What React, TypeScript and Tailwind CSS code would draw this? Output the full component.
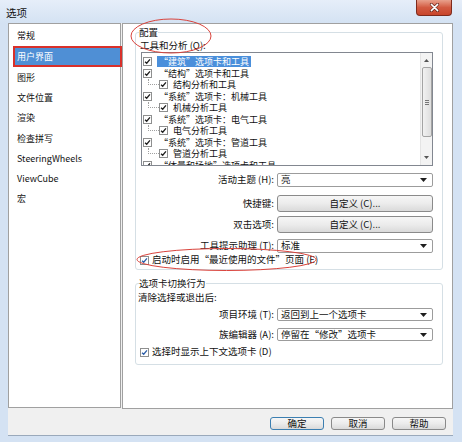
import React from "react";

const font = "font-['Noto_Sans_CJK_SC','Noto_Sans',sans-serif]";

const navItems = ["常规", "用户界面", "图形", "文件位置", "渲染", "检查拼写", "SteeringWheels", "ViewCube", "宏"];

const treeRows = [
  { text: "“建筑”选项卡和工具", sel: true },
  { text: "“结构”选项卡和工具" },
  { text: "结构分析和工具", child: true },
  { text: "“系统”选项卡：机械工具" },
  { text: "机械分析工具", child: true },
  { text: "“系统”选项卡：电气工具" },
  { text: "电气分析工具", child: true },
  { text: "“系统”选项卡：管道工具" },
  { text: "管道分析工具", child: true },
  { text: "“体量和场地”选项卡和工具" },
];

function Check({ blue }: { blue?: boolean }) {
  return (
    <span className="inline-flex h-[9px] w-[9px] shrink-0 items-center justify-center border border-[#8e8f8f] bg-white">
      <svg viewBox="0 0 8 8" className="h-[7px] w-[7px]">
        <path d="M1.2 4.2 L3.1 6 L6.8 1.6" fill="none" stroke={blue ? "#2c5ea8" : "#1e1e1e"} strokeWidth="1.5" />
      </svg>
    </span>
  );
}

function Arrow() {
  return (
    <svg viewBox="0 0 7 4" className="h-[4px] w-[7px]">
      <path d="M0 0 H7 L3.5 4 Z" fill="#1e1e1e" />
    </svg>
  );
}

function Dropdown({ value, h = "h-[14px]" }: { value: string; h?: string }) {
  return (
    <div className={`flex ${h} w-[156px] items-center justify-between rounded-[2px] border border-[#9c9c9c] bg-white pl-[3px] pr-[5px] leading-none`}>
      <span>{value}</span>
      <Arrow />
    </div>
  );
}

function WinButton({ children, w = "w-[156px]", h = "h-[17px]", def }: { children: React.ReactNode; w?: string; h?: string; def?: boolean }) {
  return (
    <div
      className={`flex ${h} ${w} items-center justify-center rounded-[3px] border ${
        def ? "border-[#3c7fb1]" : "border-[#8a8a8a]"
      } bg-linear-to-b from-[#f6f6f6] via-[#ececec] to-[#dadada] leading-none`}
    >
      {children}
    </div>
  );
}

function FieldRow({ label, children, className }: { label: string; children: React.ReactNode; className: string }) {
  return (
    <div className={`flex items-center ${className}`}>
      <span className="w-[134px] text-right leading-none">{label}</span>
      <span className="ml-[3px]">{children}</span>
    </div>
  );
}

export default function App() {
  return (
    <div className={`relative h-[442px] w-[462px] overflow-hidden bg-[#d4e2f3] text-[9.5px] text-[#111] ${font}`}>
      {/* title bar */}
      <div className="flex h-[23px] items-start justify-between bg-linear-to-b from-[#e6eef9] to-[#d4e2f3]">
        <span className="ml-[6px] mt-[6px] text-[10.5px] leading-[14px] text-[#111]">选项</span>
        <div className="mr-[10px] flex h-[16px] w-[36px] items-center justify-center rounded-b-[4px] border border-t-0 border-[#7e2a1c] bg-linear-to-b from-[#e8a08c] via-[#d25a41] to-[#c8452b]">
          <svg viewBox="0 0 12 10" className="h-[9px] w-[11px]">
            <path d="M2.5 1.5 L9.5 8.5 M9.5 1.5 L2.5 8.5" stroke="#5a1a10" strokeWidth="3.2" strokeLinecap="round" />
            <path d="M2.5 1.5 L9.5 8.5 M9.5 1.5 L2.5 8.5" stroke="#fff" strokeWidth="1.8" strokeLinecap="round" />
          </svg>
        </div>
      </div>

      {/* window content */}
      <div className="ml-[8px] flex h-[413px] w-[445px] flex-col border-b border-[#9aa9bb] bg-[#f0f0f0]">
        <div className="flex h-[386px] gap-[1px]">
          {/* left nav */}
          <div className="flex h-[385px] w-[113px] flex-col border border-[#a0a0a0] bg-white pt-[2px] text-[9px]">
            {navItems.map((item) =>
              item === "用户界面" ? (
                <div
                  key={item}
                  className="relative z-10 -mr-[2px] ml-[4px] flex h-[21px] items-center border-2 border-[#d9302a] bg-[#4f8fd5] pl-[2px] text-white"
                >
                  {item}
                </div>
              ) : (
                <div key={item} className="flex h-[20.3px] items-center pl-[8px]">
                  {item}
                </div>
              )
            )}
          </div>

          {/* right panel */}
          <div className="flex h-[386px] w-[331px] flex-col border border-[#a0a0a0] bg-white pl-[12px] pr-[9px] pt-[2px]">
            <fieldset className="rounded-[3px] border border-[#d5dfe5] pb-[3px] pl-[4px] pr-[9px]">
              <legend className="ml-[-1px] px-0 leading-[13px]">配置</legend>
              <div className="h-[12px] leading-[12px]">工具和分析 (Q):</div>
              <div className="ml-[1px] mt-[1px] flex h-[114px] border border-[#828790] bg-white text-[9px]">
                <div className="flex-1 overflow-hidden pl-[1px] pt-[3px]">
                  {treeRows.map((r, i) => (
                    <div key={i} className="flex h-[11.5px] items-center leading-none">
                      {r.child ? (
                        <>
                          <span className="ml-[5px] h-[6px] w-[11px] self-start border-b border-l border-dotted border-[#a0a0a0]" />
                          <Check />
                          <span className="ml-[5px]">{r.text}</span>
                        </>
                      ) : (
                        <>
                          <Check />
                          <span className={`ml-[5px] px-[2px] py-[1px] ${r.sel ? "bg-[#4a8fdb] text-white" : ""}`}>{r.text}</span>
                        </>
                      )}
                    </div>
                  ))}
                </div>
                <div className="flex w-[12px] flex-col items-center border-l border-[#e4e4e4] bg-[#f3f3f3]">
                  <svg viewBox="0 0 5 3" className="mt-[6px] h-[3px] w-[5px]">
                    <path d="M0 3 H5 L2.5 0 Z" fill="#555" />
                  </svg>
                  <div className="mt-[5px] flex h-[70px] w-[10px] flex-col items-center justify-center gap-[1px] rounded-[2px] border border-[#a4a4a4] bg-linear-to-r from-[#f2f2f2] to-[#dedede]">
                    <span className="h-px w-[4px] bg-[#777]" />
                    <span className="h-px w-[4px] bg-[#777]" />
                    <span className="h-px w-[4px] bg-[#777]" />
                  </div>
                  <svg viewBox="0 0 5 3" className="mb-[6px] mt-auto h-[3px] w-[5px]">
                    <path d="M0 0 H5 L2.5 3 Z" fill="#555" />
                  </svg>
                </div>
              </div>

              <FieldRow label="活动主题 (H):" className="mt-[7px]">
                <Dropdown value="亮" />
              </FieldRow>
              <FieldRow label="快捷键:" className="mt-[8px]">
                <WinButton>自定义 (C)...</WinButton>
              </FieldRow>
              <FieldRow label="双击选项:" className="mt-[4px]">
                <WinButton>自定义 (C)...</WinButton>
              </FieldRow>
              <FieldRow label="工具提示助理 (T):" className="mt-[6px]">
                <Dropdown value="标准" />
              </FieldRow>
              <div className="mt-[1px] flex h-[12px] items-center gap-[3px] leading-none">
                <Check blue />
                <span>启动时启用“最近使用的文件”页面 (E)</span>
              </div>
            </fieldset>

            <fieldset className="mt-[6px] rounded-[3px] border border-[#d5dfe5] pb-[6px] pl-[2px] pr-[9px]">
              <legend className="ml-[1px] px-0 leading-[14px]">选项卡切换行为</legend>
              <div className="mt-[1px] h-[12px] leading-[12px]">清除选择或退出后:</div>
              <FieldRow label="项目环境 (T):" className="mt-[5px] pl-[2px]">
                <Dropdown value="返回到上一个选项卡" h="h-[13px]" />
              </FieldRow>
              <FieldRow label="族编辑器 (A):" className="mt-[7px] pl-[2px]">
                <Dropdown value="停留在“修改”选项卡" h="h-[13px]" />
              </FieldRow>
              <div className="ml-[2px] mt-[5px] flex h-[12px] items-center gap-[3px] leading-none">
                <Check blue />
                <span>选择时显示上下文选项卡 (D)</span>
              </div>
            </fieldset>
          </div>
        </div>

        {/* bottom buttons */}
        <div className="flex flex-1 items-start justify-end gap-[7px] pr-[7px] pt-[8px]">
          <WinButton w="w-[54px]" h="h-[13px]" def>
            确定
          </WinButton>
          <WinButton w="w-[54px]" h="h-[13px]">
            取消
          </WinButton>
          <WinButton w="w-[54px]" h="h-[13px]">
            帮助
          </WinButton>
        </div>
      </div>

      {/* red annotation circles */}
      <svg className="pointer-events-none absolute left-0 top-0 h-[442px] w-[462px]" viewBox="0 0 462 442">
        <ellipse cx="171" cy="36" rx="40" ry="17" fill="none" stroke="#d9433c" strokeWidth="1" />
        <ellipse cx="226.5" cy="259.5" rx="89.5" ry="11" fill="none" stroke="#d9433c" strokeWidth="1" />
      </svg>
    </div>
  );
}
